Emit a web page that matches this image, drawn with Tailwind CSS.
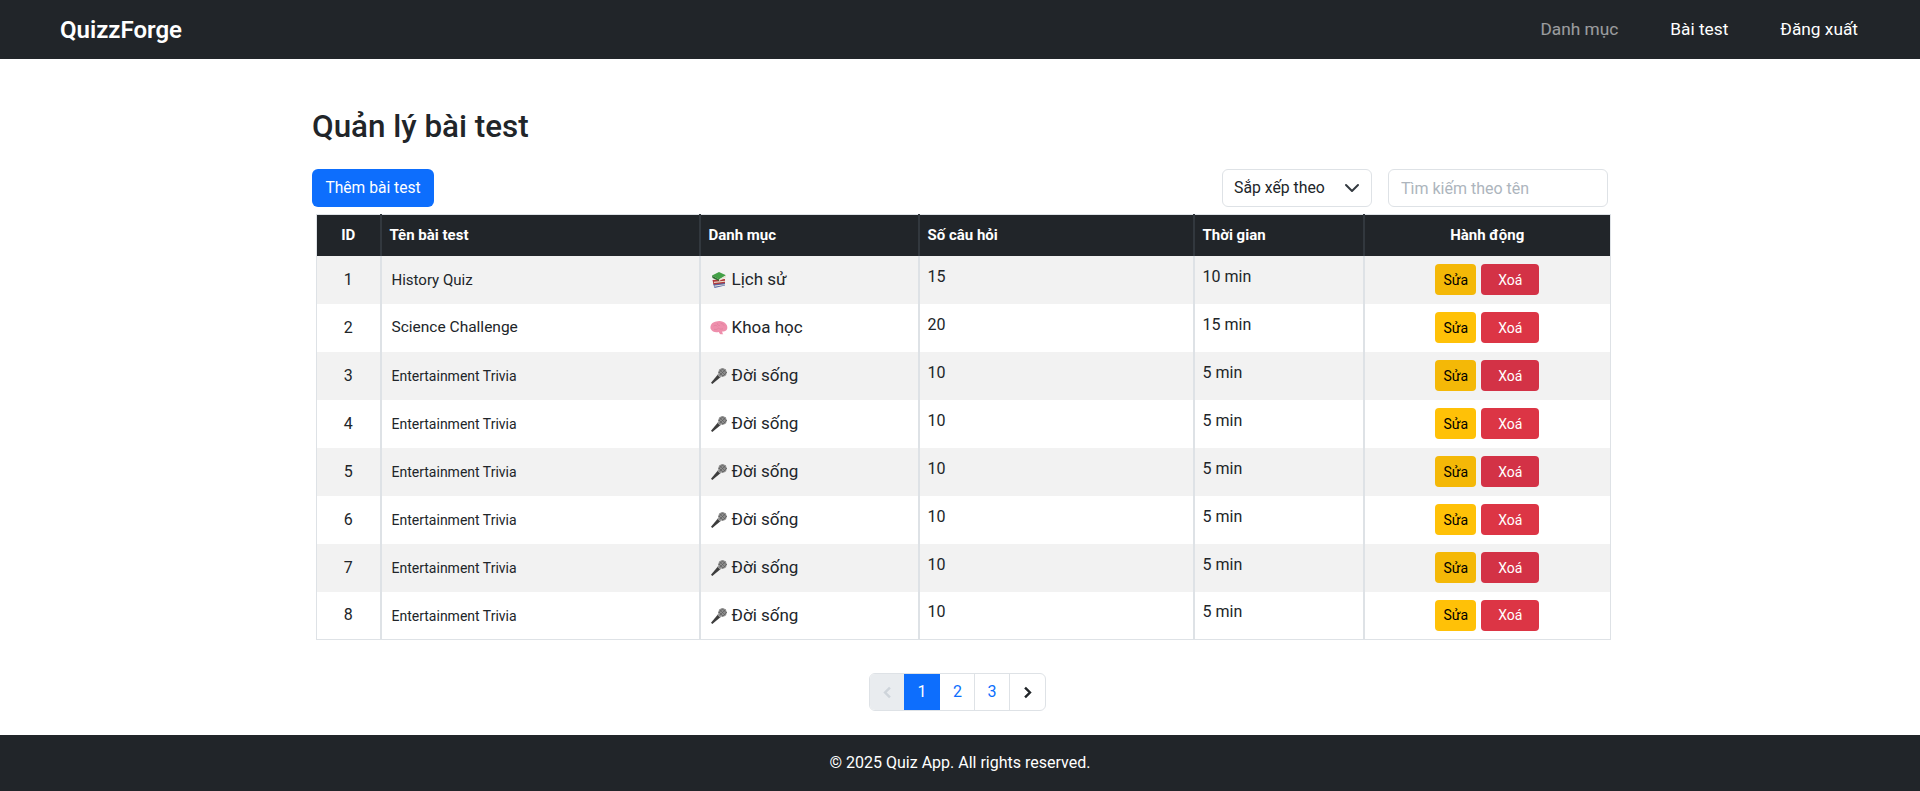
<!DOCTYPE html>
<html lang="vi">
<head>
    <meta charset="UTF-8">
    <title>QuizzForge</title>
    <script src="https://cdn.jsdelivr.net/npm/@tailwindcss/browser@4"></script>
</head>
<body class="min-h-screen flex flex-col bg-white text-[#212529] font-['Roboto',sans-serif] text-base">
    <svg width="0" height="0" class="absolute">
        <symbol id="books" viewBox="0 0 18 18">
            <path d="M3 12.500 15 11v3.500L4.500 17z" fill="#5566a6"/>
            <path d="M4.500 14.500 15 13.200v.8L4.500 15.800z" fill="#e8e4d8"/>
            <path d="M2.500 9 15 8v4L3.500 13.500z" fill="#b23a3c"/>
            <path d="M4 10.800 15 9.800v1L4 12z" fill="#e9dcc8"/>
            <path d="M2 4.500 9 1l7 3.200-7 4.300z" fill="#43a047"/>
            <path d="M2 4.500 9 8.500V10L2.500 7z" fill="#2a6e2e"/>
            <path d="M9 8.500l7-4.300V6.500L9 10z" fill="#e8e4d8"/>
        </symbol>
        <symbol id="brain" viewBox="0 0 18 18">
            <path d="M.5 9.500C0 5.500 3 2.800 6.300 2.500 9 1.500 13.500 1.800 15.800 4.800c1.800 2 2 4.800.8 6.300-1.100 1.300-2.800 1.500-4.200 1.100-.2 1.300.1 2.200.9 3.100h-2.800C9.500 14.300 9 13.500 8.800 12.900 6.200 13.800 2.300 13.500.5 9.500z" fill="#ee8fac"/>
            <path d="M3.500 7c1.700-1.100 2.800-.7 3.900.4M7.300 4.300c0 1.700 1.100 2.200 2.500 2.200M10.700 4.500c1.700 0 2.800.8 3.400 2.200M4 10.200c1.700.6 3.400.2 4.500-1.100 1.100 1.100 2.800 1.300 4.500.7" fill="none" stroke="#df7f9d" stroke-width=".8"/>
        </symbol>
        <symbol id="mic" viewBox="0 0 18 18">
            <path d="M2.300 17 1 15.700 8.300 7 11 9.700z" fill="#3d3d3d"/>
            <path d="M7.500 7.900 8.800 6.600 11.400 9.200 10.100 10.500z" fill="#a5a5a5"/>
            <circle cx="12.500" cy="5.500" r="4.300" fill="#8f8f8f"/>
            <path d="M9.800 2.700l5.500 5.500M9 5l4 4M12 1.500l4.300 4.300M15.500 2.500l-6 6M13 1.500 8.500 6M17 5l-4.500 4.500" stroke="#5c5c5c" stroke-width=".7"/>
        </symbol>
    </svg>

    <nav class="h-[59px] bg-[#212529] flex items-center justify-between pl-[60px] pr-[62px]">
        <a class="text-white text-2xl font-semibold">QuizzForge</a>
        <div class="flex gap-[52px] text-[17.3px]">
            <a class="text-white/55">Danh mục</a>
            <a class="text-white">Bài test</a>
            <a class="text-white">Đăng xuất</a>
        </div>
    </nav>

    <main class="w-[1296px] mx-auto flex-1">
        <h1 class="mt-[49px] text-[31.4px] leading-[38px] font-medium">Quản lý bài test</h1>
        <div class="mt-[23px] flex items-center justify-between">
            <button class="h-[38px] w-[122px] rounded-md bg-[#0d6efd] text-white text-[15.6px] pt-[1px]">Thêm bài test</button>
            <div class="flex gap-[16px]">
                <div class="h-[38px] w-[150px] rounded-md border border-[#dee2e6] pl-[11px] pr-[11px] flex items-center justify-between">
                    <span class="text-[15.8px]">Sắp xếp theo</span>
                    <svg width="16" height="16" viewBox="0 0 16 16" fill="none" stroke="#343a40" stroke-width="2" stroke-linecap="round" stroke-linejoin="round"><path d="m2 5 6 6 6-6"/></svg>
                </div>
                <input placeholder="Tìm kiếm theo tên" class="h-[38px] w-[220px] rounded-md border border-[#dee2e6] px-[12px] placeholder:text-[#adb5bd]">
            </div>
        </div>

        <table class="mt-[7px] ml-[4px] w-[1295px] table-fixed border-collapse border border-[#dee2e6]">
            <colgroup>
                <col class="w-[64px]"><col class="w-[319px]"><col class="w-[219px]"><col class="w-[275px]"><col class="w-[170px]"><col>
            </colgroup>
            <thead class="bg-[#212529] text-white text-[15px] font-bold">
                <tr class="h-[41px]">
                    <th class="border-r-2 border-[#32383e] text-center">ID</th>
                    <th class="border-r-2 border-[#32383e] text-left px-2">Tên bài test</th>
                    <th class="border-r-2 border-[#32383e] text-left px-2">Danh mục</th>
                    <th class="border-r-2 border-[#32383e] text-left px-2">Số câu hỏi</th>
                    <th class="border-r-2 border-[#32383e] text-left px-2">Thời gian</th>
                    <th class="text-center">Hành động</th>
                </tr>
            </thead>
            <tbody>
                <tr class="h-[48px] bg-[#f2f2f2]">
                    <td class="border-r-2 border-[#dee2e6] text-center">1</td>
                    <td class="border-r-2 border-[#dee2e6] pl-[10px] text-[15px] pt-[1px]">History Quiz</td>
                    <td class="border-r-2 border-[#dee2e6] pl-[9px] pt-[4px]"><span class="inline-flex items-center gap-[4px] text-[17px]"><svg class="w-[18px] h-[18px]"><use href="#books"/></svg>Lịch sử</span></td>
                    <td class="border-r-2 border-[#dee2e6] px-2 pb-[6px]">15</td>
                    <td class="border-r-2 border-[#dee2e6] px-2 pb-[6px]">10 min</td>
                    <td class="text-center"><div class="flex justify-center gap-[5px]"><button class="h-[31px] w-[41px] rounded-[4px] bg-[#f4b807] text-sm text-black">Sửa</button><button class="h-[31px] w-[58px] rounded-[4px] bg-[#d33246] text-sm text-white">Xoá</button></div></td>
                </tr>
                <tr class="h-[48px] bg-white">
                    <td class="border-r-2 border-[#dee2e6] text-center">2</td>
                    <td class="border-r-2 border-[#dee2e6] pl-[10px] text-[15.5px] pt-[1px]">Science Challenge</td>
                    <td class="border-r-2 border-[#dee2e6] pl-[9px] pt-[4px]"><span class="inline-flex items-center gap-[4px] text-[17px]"><svg class="w-[18px] h-[18px]"><use href="#brain"/></svg>Khoa học</span></td>
                    <td class="border-r-2 border-[#dee2e6] px-2 pb-[6px]">20</td>
                    <td class="border-r-2 border-[#dee2e6] px-2 pb-[6px]">15 min</td>
                    <td class="text-center"><div class="flex justify-center gap-[5px]"><button class="h-[31px] w-[41px] rounded-[4px] bg-[#ffc107] text-sm text-black">Sửa</button><button class="h-[31px] w-[58px] rounded-[4px] bg-[#dc3545] text-sm text-white">Xoá</button></div></td>
                </tr>
                <tr class="h-[48px] bg-[#f2f2f2]">
                    <td class="border-r-2 border-[#dee2e6] text-center">3</td>
                    <td class="border-r-2 border-[#dee2e6] pl-[10px] text-sm pt-[1px]">Entertainment Trivia</td>
                    <td class="border-r-2 border-[#dee2e6] pl-[9px] pt-[4px]"><span class="inline-flex items-center gap-[4px] text-[17px]"><svg class="w-[18px] h-[18px]"><use href="#mic"/></svg>Đời sống</span></td>
                    <td class="border-r-2 border-[#dee2e6] px-2 pb-[6px]">10</td>
                    <td class="border-r-2 border-[#dee2e6] px-2 pb-[6px]">5 min</td>
                    <td class="text-center"><div class="flex justify-center gap-[5px]"><button class="h-[31px] w-[41px] rounded-[4px] bg-[#f4b807] text-sm text-black">Sửa</button><button class="h-[31px] w-[58px] rounded-[4px] bg-[#d33246] text-sm text-white">Xoá</button></div></td>
                </tr>
                <tr class="h-[48px] bg-white">
                    <td class="border-r-2 border-[#dee2e6] text-center">4</td>
                    <td class="border-r-2 border-[#dee2e6] pl-[10px] text-sm pt-[1px]">Entertainment Trivia</td>
                    <td class="border-r-2 border-[#dee2e6] pl-[9px] pt-[4px]"><span class="inline-flex items-center gap-[4px] text-[17px]"><svg class="w-[18px] h-[18px]"><use href="#mic"/></svg>Đời sống</span></td>
                    <td class="border-r-2 border-[#dee2e6] px-2 pb-[6px]">10</td>
                    <td class="border-r-2 border-[#dee2e6] px-2 pb-[6px]">5 min</td>
                    <td class="text-center"><div class="flex justify-center gap-[5px]"><button class="h-[31px] w-[41px] rounded-[4px] bg-[#ffc107] text-sm text-black">Sửa</button><button class="h-[31px] w-[58px] rounded-[4px] bg-[#dc3545] text-sm text-white">Xoá</button></div></td>
                </tr>
                <tr class="h-[48px] bg-[#f2f2f2]">
                    <td class="border-r-2 border-[#dee2e6] text-center">5</td>
                    <td class="border-r-2 border-[#dee2e6] pl-[10px] text-sm pt-[1px]">Entertainment Trivia</td>
                    <td class="border-r-2 border-[#dee2e6] pl-[9px] pt-[4px]"><span class="inline-flex items-center gap-[4px] text-[17px]"><svg class="w-[18px] h-[18px]"><use href="#mic"/></svg>Đời sống</span></td>
                    <td class="border-r-2 border-[#dee2e6] px-2 pb-[6px]">10</td>
                    <td class="border-r-2 border-[#dee2e6] px-2 pb-[6px]">5 min</td>
                    <td class="text-center"><div class="flex justify-center gap-[5px]"><button class="h-[31px] w-[41px] rounded-[4px] bg-[#f4b807] text-sm text-black">Sửa</button><button class="h-[31px] w-[58px] rounded-[4px] bg-[#d33246] text-sm text-white">Xoá</button></div></td>
                </tr>
                <tr class="h-[48px] bg-white">
                    <td class="border-r-2 border-[#dee2e6] text-center">6</td>
                    <td class="border-r-2 border-[#dee2e6] pl-[10px] text-sm pt-[1px]">Entertainment Trivia</td>
                    <td class="border-r-2 border-[#dee2e6] pl-[9px] pt-[4px]"><span class="inline-flex items-center gap-[4px] text-[17px]"><svg class="w-[18px] h-[18px]"><use href="#mic"/></svg>Đời sống</span></td>
                    <td class="border-r-2 border-[#dee2e6] px-2 pb-[6px]">10</td>
                    <td class="border-r-2 border-[#dee2e6] px-2 pb-[6px]">5 min</td>
                    <td class="text-center"><div class="flex justify-center gap-[5px]"><button class="h-[31px] w-[41px] rounded-[4px] bg-[#ffc107] text-sm text-black">Sửa</button><button class="h-[31px] w-[58px] rounded-[4px] bg-[#dc3545] text-sm text-white">Xoá</button></div></td>
                </tr>
                <tr class="h-[48px] bg-[#f2f2f2]">
                    <td class="border-r-2 border-[#dee2e6] text-center">7</td>
                    <td class="border-r-2 border-[#dee2e6] pl-[10px] text-sm pt-[1px]">Entertainment Trivia</td>
                    <td class="border-r-2 border-[#dee2e6] pl-[9px] pt-[4px]"><span class="inline-flex items-center gap-[4px] text-[17px]"><svg class="w-[18px] h-[18px]"><use href="#mic"/></svg>Đời sống</span></td>
                    <td class="border-r-2 border-[#dee2e6] px-2 pb-[6px]">10</td>
                    <td class="border-r-2 border-[#dee2e6] px-2 pb-[6px]">5 min</td>
                    <td class="text-center"><div class="flex justify-center gap-[5px]"><button class="h-[31px] w-[41px] rounded-[4px] bg-[#f4b807] text-sm text-black">Sửa</button><button class="h-[31px] w-[58px] rounded-[4px] bg-[#d33246] text-sm text-white">Xoá</button></div></td>
                </tr>
                <tr class="h-[48px] bg-white">
                    <td class="border-r-2 border-[#dee2e6] text-center">8</td>
                    <td class="border-r-2 border-[#dee2e6] pl-[10px] text-sm pt-[1px]">Entertainment Trivia</td>
                    <td class="border-r-2 border-[#dee2e6] pl-[9px] pt-[4px]"><span class="inline-flex items-center gap-[4px] text-[17px]"><svg class="w-[18px] h-[18px]"><use href="#mic"/></svg>Đời sống</span></td>
                    <td class="border-r-2 border-[#dee2e6] px-2 pb-[6px]">10</td>
                    <td class="border-r-2 border-[#dee2e6] px-2 pb-[6px]">5 min</td>
                    <td class="text-center"><div class="flex justify-center gap-[5px]"><button class="h-[31px] w-[41px] rounded-[4px] bg-[#ffc107] text-sm text-black">Sửa</button><button class="h-[31px] w-[58px] rounded-[4px] bg-[#dc3545] text-sm text-white">Xoá</button></div></td>
                </tr>
            </tbody>
        </table>

        <div class="mt-[33px] flex justify-center pr-[5px]">
            <div class="flex h-[38px] border border-[#dee2e6] rounded-md overflow-hidden">
                <span class="w-[34px] bg-[#e9ecef] flex items-center justify-center"><svg width="13" height="13" viewBox="0 0 16 16" fill="none" stroke="#ced4da" stroke-width="3"><path d="M11 2 5 8l6 6"/></svg></span>
                <span class="w-[36px] bg-[#0d6efd] text-white flex items-center justify-center">1</span>
                <span class="w-[35px] text-[#0d6efd] border-r border-[#dee2e6] pl-[1px] flex items-center justify-center">2</span>
                <span class="w-[35px] text-[#0d6efd] border-r border-[#dee2e6] flex items-center justify-center">3</span>
                <span class="w-[35px] flex items-center justify-center"><svg width="13" height="13" viewBox="0 0 16 16" fill="none" stroke="#212529" stroke-width="3"><path d="m5 2 6 6-6 6"/></svg></span>
            </div>
        </div>
    </main>

    <footer class="h-[56px] bg-[#212529] text-white flex items-center justify-center">© 2025 Quiz App. All rights reserved.</footer>
</body>
</html>
